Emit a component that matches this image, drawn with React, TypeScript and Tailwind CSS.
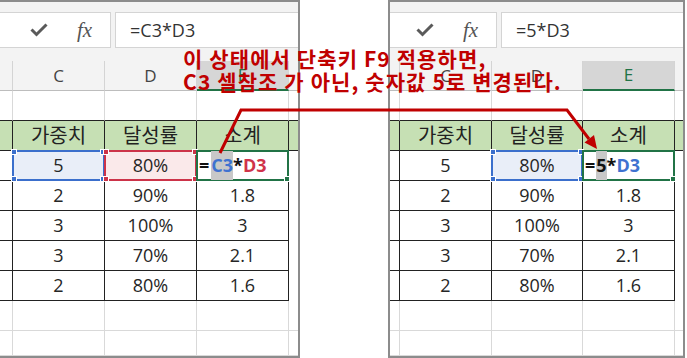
import React from "react";

type Side = "left" | "right";

const COLS: Record<Side, string[]> = {
  left: ["w-[13px]", "w-[92px]", "w-[92px]", "w-[92px]", "w-[9px]"],
  right: ["w-[10px]", "w-[92px]", "w-[91px]", "w-[92px]", "w-[8px]"],
};

function Check() {
  return (
    <svg width="18" height="14" viewBox="0 0 18 14" className="shrink-0">
      <path d="M1.5 6.5 L6.5 11.5 L16.5 1.5" fill="none" stroke="#5a5a5a" strokeWidth="3" />
    </svg>
  );
}

function FormulaBar({ side, text }: { side: Side; text: string }) {
  return (
    <div className="h-[59px] bg-[#f3f3f3] pt-[10px] flex items-start shrink-0">
      <div
        className={
          (side === "left" ? "w-[111px]" : "w-[107px]") +
          " h-[36px] bg-white border-y border-r border-[#d4d4d4] flex items-center justify-end pr-[17px] shrink-0"
        }
      >
        <Check />
        <span className="ml-[29px] w-[16px] text-[21px] leading-none italic text-[#555] font-[family-name:'Liberation_Serif',serif]">
          fx
        </span>
      </div>
      <div className="ml-[4px] flex-1 h-[36px] bg-white border-y border-l border-[#d4d4d4] pl-[14px] flex items-center text-[18px] text-[#333]">
        {text}
      </div>
    </div>
  );
}

function ColHeader({ side }: { side: Side }) {
  const c = COLS[side];
  const base = "h-full shrink-0 flex items-center justify-center text-[17px] text-[#444] border-r border-[#d4d4d4]";
  return (
    <div className="h-[30px] flex bg-[#f3f3f3] shrink-0">
      <div className={c[0] + " " + base + " border-b border-b-[#bdbdbd]"} />
      <div className={c[1] + " " + base + " border-b border-b-[#bdbdbd]"}>C</div>
      <div className={c[2] + " " + base + " border-b border-b-[#bdbdbd]"}>D</div>
      <div className={c[3] + " " + base + " bg-[#d6d6d6] text-[#217346] border-b-2 border-b-[#217346]"}>E</div>
      <div className={c[4] + " h-full shrink-0 border-b border-[#bdbdbd]"} />
    </div>
  );
}

function BlankRow({ side, h, topOfTable }: { side: Side; h: string; topOfTable?: boolean }) {
  const c = COLS[side];
  const bb = topOfTable ? "border-b-[#222]" : "border-b-[#d9d9d9]";
  return (
    <div className={h + " flex shrink-0"}>
      {c.slice(0, 4).map((w, i) => (
        <div key={i} className={w + " h-full shrink-0 border-r border-b border-r-[#d9d9d9] " + bb} />
      ))}
      <div className={c[4] + " h-full shrink-0 border-b " + bb} />
    </div>
  );
}

function Handles({ color }: { color: string }) {
  const h = "absolute w-[6px] h-[6px] border border-white " + color;
  return (
    <>
      <div className={h + " -top-[3px] -left-[3px]"} />
      <div className={h + " -top-[3px] -right-[3px]"} />
      <div className={h + " -bottom-[3px] -left-[3px]"} />
      <div className={h + " -bottom-[3px] -right-[3px]"} />
    </>
  );
}

function TableRow({
  side,
  cells,
  header,
}: {
  side: Side;
  cells: React.ReactNode[];
  header?: boolean;
}) {
  const c = COLS[side];
  const bg = header ? "bg-[#c6e0b4]" : "bg-white";
  const txt = header ? "text-[20px] text-[#222]" : "text-[18px] text-[#262626]";
  return (
    <div className={"h-[30px] flex shrink-0 " + bg}>
      <div className={c[0] + " h-full shrink-0 border-r border-b border-[#222]"} />
      {cells.map((v, i) => (
        <div
          key={i}
          className={c[i + 1] + " h-full shrink-0 border-r border-b border-[#222] flex items-center justify-center " + txt}
        >
          {v}
        </div>
      ))}
      <div className={c[4] + " h-full shrink-0 " + (header ? "border-b border-[#222]" : "")} />
    </div>
  );
}

function RefCell({
  w,
  fill,
  border,
  handle,
  children,
}: {
  w: string;
  fill: string;
  border: string;
  handle: string;
  children: React.ReactNode;
}) {
  return (
    <div className={w + " h-full shrink-0 relative border-r border-b border-[#222] flex items-center justify-center text-[18px] text-[#262626] " + fill}>
      <div className={"absolute -top-[1px] -left-[1px] -right-[1px] -bottom-[1px] border-2 " + border}>
        <Handles color={handle} />
      </div>
      <span className="relative">{children}</span>
    </div>
  );
}

function ActiveCell({ w, children }: { w: string; children: React.ReactNode }) {
  return (
    <div className={w + " h-full shrink-0 relative border-r border-b border-[#222] bg-white flex items-stretch pl-[2px] text-[18px] font-bold"}>
      <div className="absolute -top-[1px] -left-[1px] -right-[1px] -bottom-[1px] border-2 border-[#217346]">
        <div className="absolute w-[6px] h-[6px] bg-[#217346] border border-white -bottom-[3px] -right-[3px]" />
      </div>
      {children}
    </div>
  );
}

function Row3({ side }: { side: Side }) {
  const c = COLS[side];
  if (side === "left") {
    return (
      <div className="h-[30px] flex shrink-0 bg-white">
        <div className={c[0] + " h-full shrink-0 border-r border-b border-[#222]"} />
        <RefCell w={c[1]} fill="bg-[#e9eef8]" border="border-[#3b6fcc]" handle="bg-[#3b6fcc]">
          5
        </RefCell>
        <RefCell w={c[2]} fill="bg-[#fae9ea]" border="border-[#cc3349]" handle="bg-[#cc3349]">
          80%
        </RefCell>
        <ActiveCell w={c[3]}>
          <span className="relative flex items-center text-[#111]">=</span>
          <span className="relative flex items-center bg-[#c8c8c8] text-[#3f72d0] ml-[2px]">C3</span>
          <span className="relative flex items-center text-[#111]">*</span>
          <span className="relative flex items-center text-[#d0334a]">D3</span>
        </ActiveCell>
        <div className={c[4] + " h-full shrink-0"} />
      </div>
    );
  }
  return (
    <div className="h-[30px] flex shrink-0 bg-white">
      <div className={c[0] + " h-full shrink-0 border-r border-b border-[#222]"} />
      <div className={c[1] + " h-full shrink-0 border-r border-b border-[#222] flex items-center justify-center text-[18px] text-[#262626]"}>
        5
      </div>
      <RefCell w={c[2]} fill="bg-[#e9eef8]" border="border-[#3b6fcc]" handle="bg-[#3b6fcc]">
        80%
      </RefCell>
      <ActiveCell w={c[3]}>
        <span className="relative flex items-center text-[#111]">=</span>
        <span className="relative flex items-center bg-[#c8c8c8] text-[#111] ml-[1px]">5</span>
        <span className="relative flex items-center text-[#111]">*</span>
        <span className="relative flex items-center text-[#3f72d0]">D3</span>
      </ActiveCell>
      <div className={c[4] + " h-full shrink-0"} />
    </div>
  );
}

const DATA = [
  ["2", "90%", "1.8"],
  ["3", "100%", "3"],
  ["3", "70%", "2.1"],
  ["2", "80%", "1.6"],
];

function Panel({ side }: { side: Side }) {
  return (
    <div
      className={
        (side === "left"
          ? "w-[300px] border-t-2 border-b-2 border-r-2"
          : "w-[297px] border-2") +
        " h-[358px] border-[#8c8c8c] flex flex-col shrink-0 overflow-hidden"
      }
    >
      <FormulaBar side={side} text={side === "left" ? "=C3*D3" : "=5*D3"} />
      <ColHeader side={side} />
      <BlankRow side={side} h="h-[30px]" topOfTable />
      <TableRow side={side} header cells={["가중치", "달성률", "소계"]} />
      <Row3 side={side} />
      {DATA.map((r, i) => (
        <TableRow key={i} side={side} cells={r} />
      ))}
      <BlankRow side={side} h="h-[30px]" />
      <BlankRow side={side} h="h-[25px]" />
    </div>
  );
}

export default function App() {
  return (
    <div className="relative w-[687px] h-[358px] bg-white overflow-hidden font-[family-name:'Open_Sans','Noto_Sans_CJK_KR',sans-serif]">
      <div className="flex">
        <Panel side="left" />
        <div className="w-[88px] shrink-0" />
        <Panel side="right" />
      </div>
      <svg className="absolute left-0 top-0 pointer-events-none" width="687" height="358" viewBox="0 0 687 358">
        <polyline
          points="220,153 241,110 567,110 589,139"
          fill="none"
          stroke="#c00000"
          strokeWidth="3"
          strokeLinejoin="miter"
        />
        <polygon points="597,149 584.5,142.5 594,135" fill="#c00000" />
      </svg>
      <div className="absolute left-[183px] top-[47px] text-[21px] font-bold leading-[23px] tracking-[1.1px] text-[#c00000] whitespace-nowrap font-[family-name:'Noto_Sans_CJK_KR',sans-serif]">
        <div>이 상태에서 단축키 F9 적용하면,</div>
        <div>C3 셀참조 가 아닌, 숫자값 5로 변경된다.</div>
      </div>
    </div>
  );
}
